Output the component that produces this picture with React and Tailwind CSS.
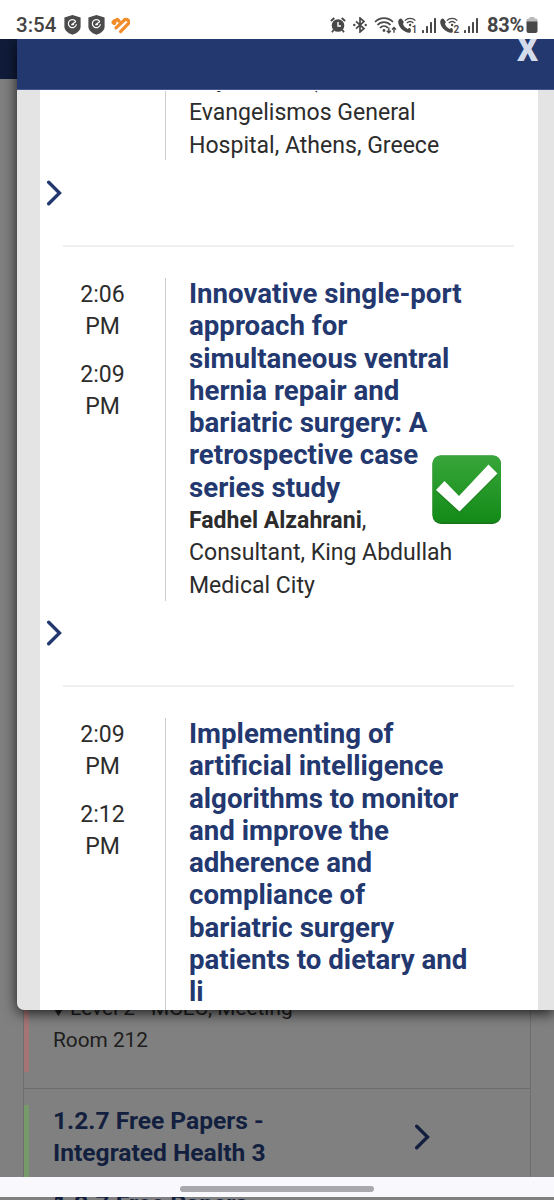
const talks = [
  {
    start: "2:06",
    end: "2:09",
    title: [
      "Innovative single-port",
      "approach for",
      "simultaneous ventral",
      "hernia repair and",
      "bariatric surgery: A",
      "retrospective case",
      "series study",
    ],
    speaker: "Fadhel Alzahrani",
    affiliation: ["Consultant, King Abdullah", "Medical City"],
    done: true,
  },
  {
    start: "2:09",
    end: "2:12",
    title: [
      "Implementing of",
      "artificial intelligence",
      "algorithms to monitor",
      "and improve the",
      "adherence and",
      "compliance of",
      "bariatric surgery",
      "patients to dietary and",
      "li",
    ],
  },
];

const Shield = () => (
  <svg viewBox="0 0 17 20" className="h-5 w-[17px]">
    <path d="M8.5 0 16.6 2.6v9c0 4-3.600 6.800-8.100 8.200C4 18.400.4 15.600.4 11.600v-9z" fill="#4b4b4b" />
    <path
      d="M11.500 6.200A4 4 0 1 0 12.300 9.500M7.800 9.600 11.600 6.800M7.800 9.600h1.800"
      fill="none"
      stroke="#fff"
      strokeWidth="1.200"
      strokeLinecap="round"
    />
  </svg>
);

const HeartLogo = () => (
  <svg viewBox="0 0 19 17" className="h-[17px] w-[19px]" fill="none" stroke="#f28c28" strokeLinecap="round">
    <path d="M2.600 5.400 3.200 5.900" strokeWidth="4.200" />
    <path d="M3.200 4 6.400 2.500 8 4" strokeWidth="3.400" strokeLinejoin="round" />
    <path d="M5 10.800 13.600 2.800" strokeWidth="3.200" />
    <path d="M9.600 14.600 16.600 7.400M13.600 2.800a2.300 2.300 0 0 1 3 4.600" strokeWidth="3.200" />
  </svg>
);

const Alarm = () => (
  <svg viewBox="0 0 16 16" className="h-4 w-4" fill="none" stroke="#484848">
    <circle cx="8" cy="8.500" r="6.300" fill="#484848" stroke="none" />
    <path d="M.9 4 4.300 1M15.100 4 11.700 1" strokeWidth="2" />
    <path d="M3.800 12.800 2 15.300M12.200 12.800 14 15.300" strokeWidth="1.800" />
    <path d="M8 5v4h3" stroke="#fff" strokeWidth="1.400" />
  </svg>
);

const Bluetooth = () => (
  <svg viewBox="0 0 14 16" className="h-4 w-3.5" fill="none" stroke="#484848" strokeWidth="1.700">
    <path d="M3 4.300 11 11.500 7 15V1l4 3.500-8 7.200" />
    <circle cx="1.300" cy="8" r="1.200" fill="#484848" stroke="none" />
    <circle cx="12.700" cy="8" r="1.200" fill="#484848" stroke="none" />
  </svg>
);

const Wifi = () => (
  <svg viewBox="0 0 23 17" className="h-[17px] w-[23px]" fill="none" stroke="#484848" strokeWidth="1.700">
    <path d="M1 5C6-.2 14-.2 19 5M3.500 8c3.500-3.800 9.500-3.800 13 0M6 10.800c2.300-2.300 5.700-2.300 8 0" />
    <circle cx="10" cy="13.500" r="1.400" fill="#484848" stroke="none" />
    <path d="M14.800 10.500v5.200M12.800 13.800l2 2 2-2M20 15.800v-5.200M18 12.500l2-2 2 2" strokeWidth="1.400" />
  </svg>
);

const WifiCall = ({ sim }) => (
  <svg viewBox="0 0 20 17" className="h-[17px] w-5">
    <path
      d="M1 2.500C2 1.400 3.200 1.200 4 2.200l1.500 2.200c.5.800.2 1.500-.6 2.300.9 2.500 2.500 4.200 4.900 5.300.9-.9 1.500-1.200 2.300-.6l.7.600v3c-1.300 1.200-3 1-4.900.1C4.200 13.400 1.500 10.400.5 7 0 5 .1 3.600 1 2.500z"
      fill="#484848"
    />
    <path d="M6.800 3.600c3-2.900 7.600-2.900 10.600 0M8.800 6c2-1.800 4.600-1.800 6.600 0" fill="none" stroke="#484848" strokeWidth="1.300" />
    <circle cx="12.100" cy="8" r="1.200" fill="#484848" />
    <text x="13.600" y="16" fontSize="10" fontWeight="600" fontFamily="Roboto, sans-serif" fill="#484848">
      {sim}
    </text>
  </svg>
);

const Signal = () => (
  <svg viewBox="0 0 15 15" className="h-[15px] w-[15px]" fill="#484848">
    <rect x="0" y="12" width="2" height="3" rx=".6" />
    <rect x="4" y="8" width="2" height="7" rx=".6" />
    <rect x="8" y="4" width="2" height="11" rx=".6" />
    <rect x="12" y="0" width="2" height="15" rx=".6" />
  </svg>
);

const Chevron = ({ color }) => (
  <svg viewBox="0 0 16 26" className="h-[26px] w-4" fill="none" stroke={color} strokeWidth="3.400" strokeLinecap="round">
    <path d="M2.700 2.200 13.500 13 2.700 23.800" />
  </svg>
);

const CheckBadge = () => (
  <svg viewBox="0 0 70 70" className="absolute left-[392px] top-[177px] h-[70px] w-[70px]">
    <defs>
      <linearGradient id="badge" x1="0" y1="0" x2="0" y2="1">
        <stop offset="0" stopColor="#38a63a" />
        <stop offset="1" stopColor="#138a18" />
      </linearGradient>
    </defs>
    <rect x=".5" y=".5" width="68.500" height="68.500" rx="8.500" fill="#187319" />
    <rect x=".5" y=".5" width="68.500" height="67" rx="8" fill="url(#badge)" />
    <path d="M4 36.500 12.500 27.500 27 42 56.500 11 65.500 20 27.500 58z" fill="#187319" opacity=".6" />
    <path d="M4 35 12.500 26 27 41 56.500 9.500 65.500 18.500 27.500 56.500z" fill="#fff" />
  </svg>
);

const StatusBar = () => (
  <header className="flex h-[39px] shrink-0 items-center bg-white pl-4 pr-4 pt-[11px]">
    <span className="w-12 text-[20.500px] font-medium leading-none text-[#444]">3:54</span>
    <div className="flex items-center gap-[7px]">
      <Shield />
      <Shield />
      <span className="ml-[-1px] flex">
        <HeartLogo />
      </span>
    </div>
    <div className="ml-auto flex items-center">
      <Alarm />
      <span className="ml-[7px] flex">
        <Bluetooth />
      </span>
      <span className="ml-[7px] flex">
        <Wifi />
      </span>
      <span className="ml-px flex">
        <WifiCall sim="1" />
      </span>
      <span className="ml-1 flex">
        <Signal />
      </span>
      <span className="ml-[3px] flex">
        <WifiCall sim="2" />
      </span>
      <span className="ml-1 flex">
        <Signal />
      </span>
      <span className="ml-2 w-[39px] text-[20px] font-bold leading-none tracking-[-0.2px] text-[#444]">83%</span>
      <svg viewBox="0 0 12 16" className="h-4 w-3">
        <path d="M3.500 0h5v1.500H10A1.500 1.500 0 0 1 11.500 3v2H.5V3A1.500 1.500 0 0 1 2 1.500h1.500z" fill="#bbb" />
        <path d="M.5 4.500h11v9.500A2 2 0 0 1 9.500 16h-7a2 2 0 0 1-2-2z" fill="#484848" />
      </svg>
    </div>
  </header>
);

const Separator = () => (
  <>
    <div className="flex h-[84px] shrink-0 pl-1.5 pt-[19px]">
      <Chevron color="#23386f" />
    </div>
    <div className="mb-[31px] ml-[23px] mr-6 h-0.5 shrink-0 bg-[#efefef]" />
  </>
);

const Talk = ({ talk }) => (
  <article className="relative flex shrink-0">
    <div className="w-[125px] shrink-0 pt-px text-center">
      <p>
        {talk.start}
        <br />
        PM
      </p>
      <p className="mt-[15px]">
        {talk.end}
        <br />
        PM
      </p>
    </div>
    <div className="whitespace-nowrap border-l border-[#ccc] pl-[23px]">
      <h2 className="text-[27.650px] font-bold text-[#23386f]">
        {talk.title.map((line) => (
          <span key={line} className="block">
            {line}
          </span>
        ))}
      </h2>
      {talk.speaker ? (
        <div className="mb-[-1px] pt-px">
          <p>
            <b>{talk.speaker}</b>,
          </p>
          {talk.affiliation.map((line) => (
            <p key={line}>{line}</p>
          ))}
        </div>
      ) : (
        <div className="h-4" />
      )}
    </div>
    {talk.done ? <CheckBadge /> : null}
  </article>
);

const Modal = () => (
  <section className="absolute left-[17px] right-0 top-0 flex h-[971px] flex-col overflow-hidden rounded-bl-[7px] bg-[#e4e4e4] shadow-[0_3px_14px_rgba(0,0,0,0.8)]">
    <div className="flex h-[51px] shrink-0 justify-end border-b border-[#42568b] bg-[#23386f] pr-4">
      <span className="mt-[-11px] text-[33px] font-black leading-[44px] text-[#d4dcec]">X</span>
    </div>
    <div className="ml-[23px] mr-4 flex min-h-0 flex-1 flex-col overflow-hidden border-t border-white bg-white text-[23.050px] leading-[32.300px] text-[#2c2c2c]">
      {/* tail of the previous talk, scrolled under the header */}
      <div className="mb-px flex h-[69px] shrink-0">
        <div className="w-[125px]" />
        <div className="flex flex-col justify-end whitespace-nowrap border-l border-[#ccc] pl-[23px]">
          <p className="mb-px mt-[-1px]">Physicians, (</p>
          <p>Evangelismos General</p>
          <p className="mb-[-2px]">Hospital, Athens, Greece</p>
        </div>
      </div>
      <Separator />
      <Talk talk={talks[0]} />
      <Separator />
      <Talk talk={talks[1]} />
    </div>
  </section>
);

// Session list sitting under the dimmed backdrop
const Backdrop = () => (
  <div className="flex h-full flex-col bg-[#808080] leading-8 text-[#1d1d1d]">
    <div className="h-10 shrink-0 bg-[#101c3a]" />
    <div className="ml-[23px] mr-[23px] flex flex-1 flex-col border-x border-[#6e6e6e]">
      <div className="flex h-[1010px] flex-col justify-end border-b border-[#6c6c6c] pb-4">
        <div className="border-l-[5px] border-[#a57575] pb-4 pl-6 text-[20.800px]">
          <p className="flex items-center whitespace-nowrap">
            <svg viewBox="0 0 12 18" className="mr-1.5 h-[18px] w-[11px]" fill="#1d1d1d">
              <path d="M6 0a6 6 0 0 1 6 6c0 4-4 8-6 12C4 14 0 10 0 6a6 6 0 0 1 6-6z" />
            </svg>
            Level 2 - MCEC, Meeting
          </p>
          <p>Room 212</p>
        </div>
      </div>
      <div className="mt-4 flex flex-1 items-start justify-between border-l-[5px] border-[#769a69] pl-6 pr-[100px] text-[24.600px] font-bold text-[#131f3f]">
        <h3>
          1.2.7 Free Papers -
          <br />
          Integrated Health 3
        </h3>
        <span className="mt-[19px]">
          <Chevron color="#131f3f" />
        </span>
      </div>
    </div>
  </div>
);

export default function App() {
  return (
    <div className="flex h-[1200px] w-[554px] flex-col overflow-hidden bg-white font-['Roboto',sans-serif]">
      <StatusBar />
      <main className="relative h-[1138px] shrink-0 overflow-hidden">
        <Backdrop />
        <Modal />
      </main>
      <div className="flex h-5 shrink-0 items-center justify-center bg-[#f8f8fd] pt-[3px]">
        <div className="h-1.5 w-[194px] rounded-full bg-[#a9a9ad]" />
      </div>
      <div className="h-[3px] shrink-0 overflow-hidden bg-[#808080] pl-[53px] text-[24.600px] font-bold leading-[14px] text-[#131f3f]">
        1.2.7 Free Papers
      </div>
    </div>
  );
}
